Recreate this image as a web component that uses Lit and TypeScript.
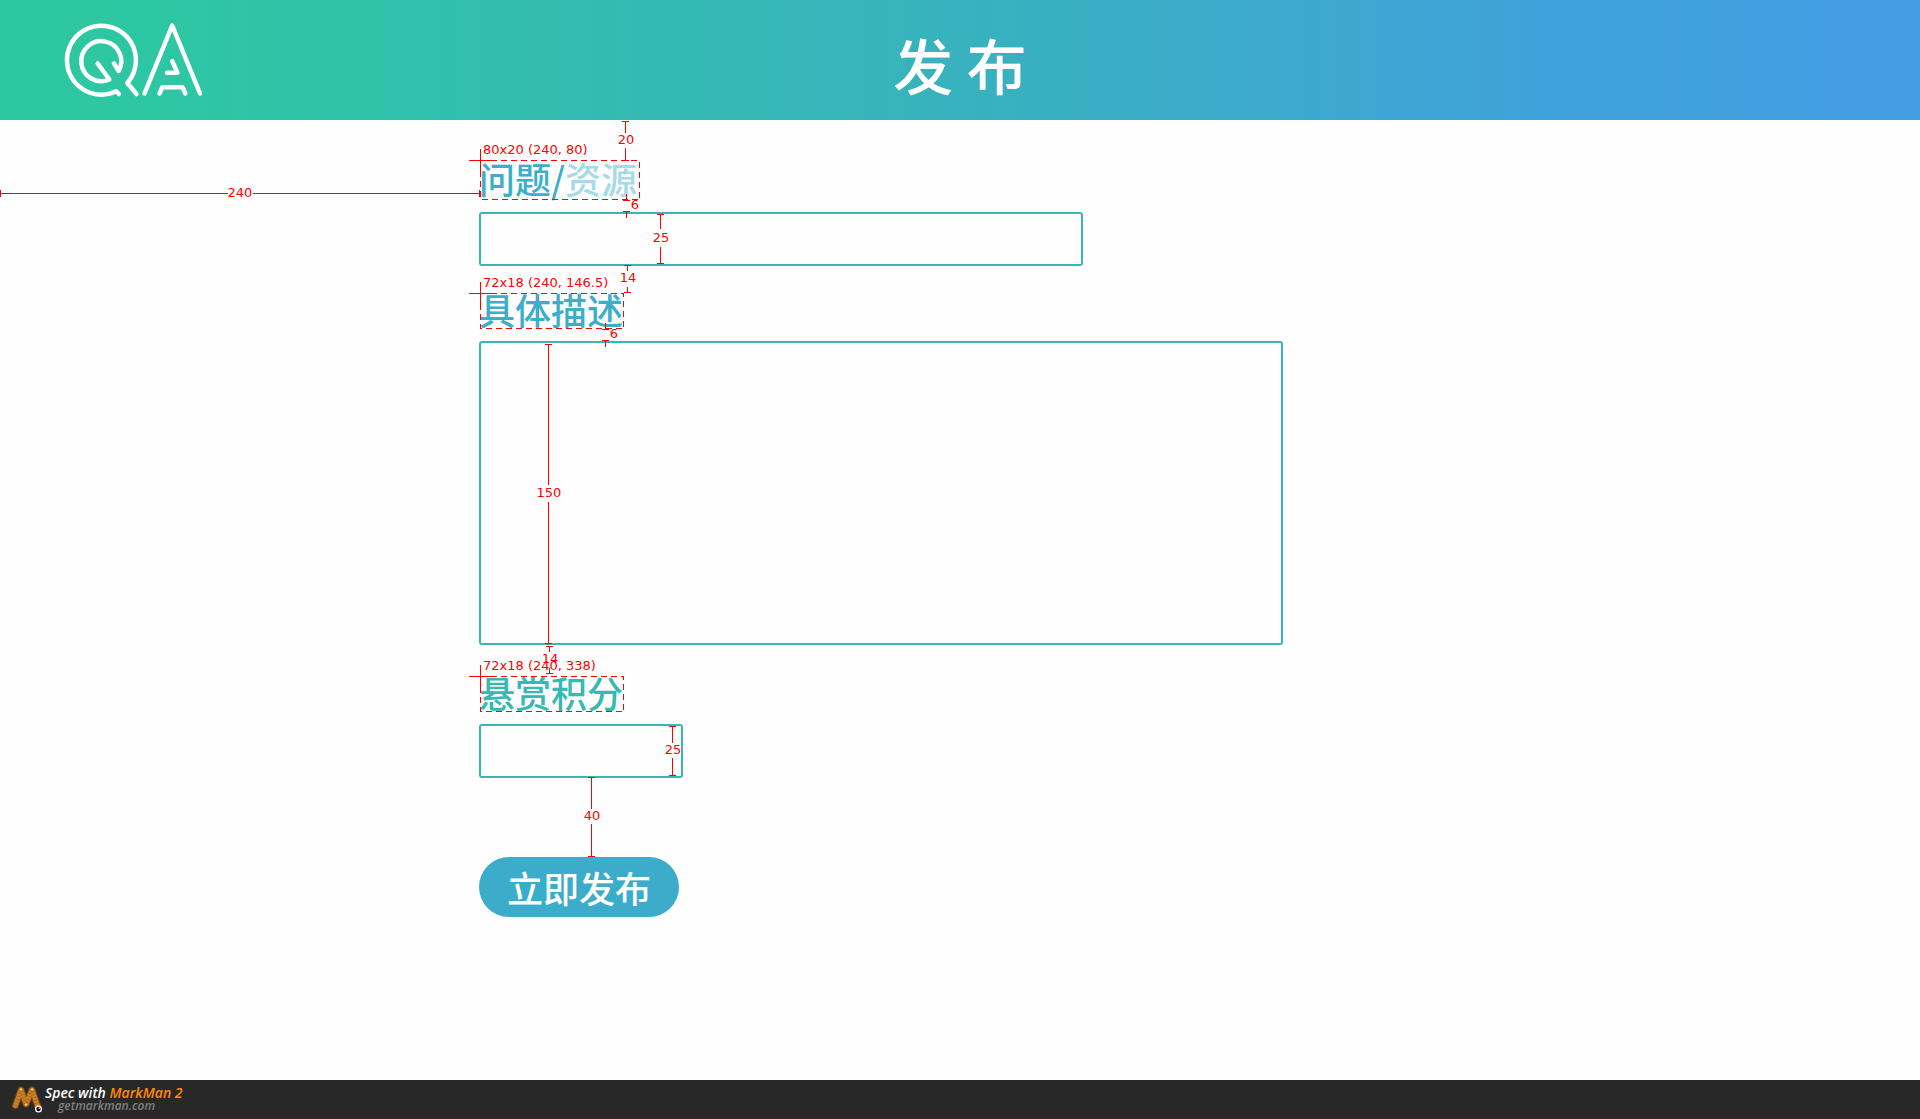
import { LitElement, html, svg, css } from "lit";
import { customElement } from "lit/decorators.js";

interface Measure {
  x: number;
  y1: number;
  y2: number;
  label: string;
  lx: number;
  ly: number;
  gap?: [number, number];
}

interface Box {
  x: number;
  y: number;
  w: number;
  h: number;
  label: string;
}

const MEASURES: Measure[] = [
  { x: 625, y1: 121, y2: 160, label: "20", lx: 626, ly: 144, gap: [133, 148] },
  { x: 626, y1: 200, y2: 211, label: "6", lx: 635, ly: 209 },
  { x: 660, y1: 214, y2: 263, label: "25", lx: 661, ly: 242, gap: [229, 247] },
  { x: 627, y1: 265, y2: 292, label: "14", lx: 628, ly: 282, gap: [271, 287] },
  { x: 605, y1: 329, y2: 340, label: "6", lx: 614, ly: 338 },
  { x: 548, y1: 344, y2: 643, label: "150", lx: 549, ly: 497, gap: [485, 502] },
  { x: 549, y1: 646, y2: 673, label: "14", lx: 550, ly: 663, gap: [652, 668] },
  { x: 672, y1: 726, y2: 775, label: "25", lx: 673, ly: 754, gap: [743, 758] },
  { x: 591, y1: 777, y2: 856, label: "40", lx: 592, ly: 820, gap: [809, 824] },
];

const BOXES: Box[] = [
  { x: 480, y: 160, w: 159, h: 39, label: "80x20 (240, 80)" },
  { x: 480, y: 293, w: 143, h: 35, label: "72x18 (240, 146.5)" },
  { x: 480, y: 676, w: 143, h: 35, label: "72x18 (240, 338)" },
];

@customElement("spec-overlay")
export class SpecOverlay extends LitElement {
  static styles = css`
    :host {
      position: absolute;
      top: 0;
      left: 0;
      pointer-events: none;
    }
    svg {
      display: block;
    }
    .line {
      fill: none;
      stroke: #ff0000;
      stroke-width: 1;
      shape-rendering: crispEdges;
    }
    .dashed {
      stroke-dasharray: 6 4;
    }
    .text {
      fill: #ff0000;
      font-family: "DejaVu Sans", sans-serif;
      font-size: 13px;
    }
    .middle {
      text-anchor: middle;
    }
  `;

  private measure(m: Measure) {
    const x = m.x + 0.5;
    const a = m.y1 + 0.5;
    const b = m.y2 + 0.5;
    const caps = `M${m.x - 3} ${a}h7M${m.x - 3} ${b}h7`;
    const body = m.gap
      ? `M${x} ${m.y1}V${m.gap[0]}M${x} ${m.gap[1]}V${m.y2}`
      : `M${x} ${m.y1}v-6M${x} ${m.y2}v7`;
    return svg`
      <path class="line" d=${caps + body}></path>
      <text class="text middle" x=${m.lx} y=${m.ly}>${m.label}</text>`;
  }

  private box(b: Box) {
    const x = b.x + 0.5;
    const y = b.y + 0.5;
    return svg`
      <rect class="line dashed" x=${x} y=${y} width=${b.w} height=${b.h}></rect>
      <path class="line" d=${`M${b.x - 11} ${y}h24M${x} ${b.y - 11}v24`}></path>
      <text class="text" x=${b.x + 3} y=${b.y - 6}>${b.label}</text>`;
  }

  render() {
    return html`
      <svg width="720" height="870" viewBox="0 0 720 870">
        ${BOXES.map((b) => this.box(b))}
        ${MEASURES.map((m) => this.measure(m))}
        <path class="line" d="M0.5 190v7M0 193.5H228M253 193.5H480M479.5 190v7"></path>
        <text class="text middle" x="240" y="197">240</text>
      </svg>
    `;
  }
}

@customElement("app-root")
export class AppRoot extends LitElement {
  static styles = css`
    :host {
      display: flex;
      flex-direction: column;
      position: relative;
      min-height: 100vh;
      background: #fefefe;
      font-family: "Noto Sans CJK SC", sans-serif;
    }
    * {
      box-sizing: border-box;
    }
    .header {
      display: grid;
      grid-template-columns: 1fr auto 1fr;
      align-items: center;
      height: 120px;
      padding: 0 64px;
      color: #fff;
      background: linear-gradient(90deg, #2cc8a0 0%, #2ec6a4 10%, #38b2be 50%, #40a2da 80%, #439de3 100%);
    }
    .logo {
      display: block;
      width: 140px;
      height: 80px;
    }
    .title {
      margin: 0;
      padding-top: 8px;
      font-size: 60px;
      line-height: 80px;
      font-weight: 500;
    }
    .main {
      flex: 1;
    }
    .form {
      display: flex;
      flex-direction: column;
      align-items: flex-start;
      padding: 38px 24px 40px 479px;
    }
    .label {
      font-size: 36px;
      line-height: 36px;
      font-weight: 450;
      color: #3aaeca;
      margin-bottom: 14px;
    }
    .kind {
      line-height: 40px;
    }
    .muted {
      color: #a6dbe6;
    }
    .reward {
      color: #35b9b3;
    }
    .field {
      display: block;
      width: 100%;
      height: 54px;
      margin: 0 0 25px;
      padding: 8px 12px;
      border: 2px solid #37b8b5;
      border-radius: 3px;
      background: transparent;
      font: 24px "Noto Sans CJK SC", sans-serif;
      color: #333;
      outline: none;
      resize: none;
    }
    .subject {
      max-width: 604px;
    }
    .details {
      max-width: 804px;
      height: 304px;
      margin-bottom: 29px;
    }
    .points {
      max-width: 204px;
      margin-bottom: 79px;
    }
    .submit {
      width: 200px;
      height: 60px;
      padding: 0;
      border: 0;
      border-radius: 30px;
      background: #3badca;
      color: #fff;
      font: 500 36px/60px "Noto Sans CJK SC", sans-serif;
      cursor: pointer;
    }
    .footer {
      display: flex;
      align-items: center;
      height: 39px;
      padding: 0 12px;
      gap: 1px;
      background: #282828;
      border-bottom: 1px solid #38262f;
      font-family: "Open Sans", sans-serif;
      font-style: italic;
      font-weight: 600;
    }
    .worm {
      display: block;
      width: 32px;
      height: 28px;
    }
    .credit {
      display: flex;
      flex-direction: column;
      font-size: 14px;
      line-height: 14px;
      color: #fff;
    }
    .brand {
      color: #ff8a00;
    }
    .site {
      padding-left: 13px;
      font-size: 12px;
      line-height: 12px;
      color: #808080;
      text-decoration: none;
    }
  `;

  render() {
    return html`
      <header class="header">
        <svg class="logo" viewBox="64 20 140 80" role="img" aria-label="QA"
          fill="none" stroke="#fff" stroke-width="4.5" stroke-linecap="round" stroke-linejoin="round">
          <path d="M136.5 94L127.3 83A34.5 34.5 0 1 0 116.3 91.3L119 94"></path>
          <path d="M97.7 63.5L109.3 79.5A20 20 0 1 1 118.7 71L114 63.5"></path>
          <path d="M144.5 93.5L172.2 25.5L200 93.5"></path>
          <path d="M172.2 61L177.5 72.8H167M159.5 93.5L162.3 87.3H182.5L185.3 93.5"></path>
        </svg>
        <h1 class="title">发 布</h1>
      </header>
      <main class="main">
        <form class="form" @submit=${(e: Event) => e.preventDefault()}>
          <label class="label kind" for="subject">问题/<span class="muted">资源</span></label>
          <input class="field subject" id="subject" type="text" />
          <label class="label" for="details">具体描述</label>
          <textarea class="field details" id="details"></textarea>
          <label class="label reward" for="points">悬赏积分</label>
          <input class="field points" id="points" type="text" inputmode="numeric" />
          <button class="submit" type="submit">立即发布</button>
        </form>
      </main>
      <footer class="footer">
        <svg class="worm" viewBox="12 1086 32 28" aria-hidden="true" fill="none"
          stroke-linecap="round" stroke-linejoin="round">
          <path d="M15.5 1106.500L21 1091L26 1105L32 1091L38 1108" stroke="#7a430e" stroke-width="7"></path>
          <path d="M15.5 1106.500L21 1091L26 1105L32 1091L38 1108" stroke="#cb822c" stroke-width="5"></path>
          <path d="M15.5 1106.500L21 1091L26 1105L32 1091L38 1108" stroke="#8f5216" stroke-width="5"
            stroke-dasharray="1 2" stroke-linecap="butt" opacity="0.5"></path>
          <g fill="#ffe09a">
            <circle cx="21" cy="1090.500" r="1"></circle>
            <circle cx="26" cy="1105.500" r="1"></circle>
            <circle cx="32" cy="1090.500" r="1"></circle>
          </g>
          <circle cx="38.5" cy="1110" r="3.5" fill="#fff"></circle>
          <circle cx="38.500" cy="1110" r="2.2" fill="#111"></circle>
          <circle cx="39.300" cy="1109.200" r="0.7" fill="#fff"></circle>
        </svg>
        <div class="credit">
          <span>Spec with <span class="brand">MarkMan 2</span></span>
          <a class="site" href="#">getmarkman.com</a>
        </div>
      </footer>
      <spec-overlay></spec-overlay>
    `;
  }
}
